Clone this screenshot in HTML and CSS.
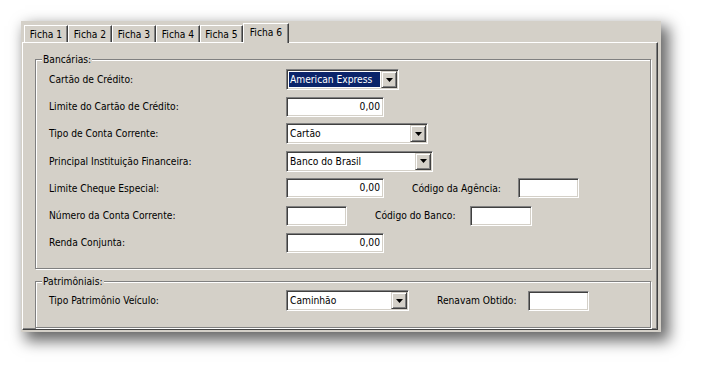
FILE: index.html
```html
<!DOCTYPE html>
<html lang="pt">
<head>
<meta charset="utf-8">
<title>Fichas</title>
<link rel="stylesheet" href="styles.css">
</head>
<body>
<div class="window">
  <div class="tabs">
    <div class="tab">Ficha 1</div>
    <div class="tab">Ficha 2</div>
    <div class="tab">Ficha 3</div>
    <div class="tab">Ficha 4</div>
    <div class="tab t5">Ficha 5</div>
    <div class="tab active">Ficha 6</div>
  </div>
  <div class="panel">
    <div class="group g1">
      <span class="legend">Bancárias:</span>
      <div class="row">
        <span class="lbl">Cartão de Crédito:</span>
        <div class="combo w113"><span class="val hl">American Express</span><span class="btn"><svg width="7" height="4" viewBox="0 0 7 4"><polygon points="0,0 7,0 3.5,4" fill="#000"/></svg></span></div>
      </div>
      <div class="row">
        <span class="lbl">Limite do Cartão de Crédito:</span>
        <div class="edit w98">0,00</div>
      </div>
      <div class="row">
        <span class="lbl">Tipo de Conta Corrente:</span>
        <div class="combo w142"><span class="val">Cartão</span><span class="btn"><svg width="7" height="4" viewBox="0 0 7 4"><polygon points="0,0 7,0 3.5,4" fill="#000"/></svg></span></div>
      </div>
      <div class="row">
        <span class="lbl">Principal Instituição Financeira:</span>
        <div class="combo w147"><span class="val">Banco do Brasil</span><span class="btn"><svg width="7" height="4" viewBox="0 0 7 4"><polygon points="0,0 7,0 3.5,4" fill="#000"/></svg></span></div>
      </div>
      <div class="row">
        <span class="lbl">Limite Cheque Especial:</span>
        <div class="edit w98">0,00</div>
        <span class="lbl2 w106">Código da Agência:</span>
        <div class="edit w61"></div>
      </div>
      <div class="row">
        <span class="lbl">Número da Conta Corrente:</span>
        <div class="edit w61"></div>
        <span class="lbl2 w95">Código do Banco:</span>
        <div class="edit w62"></div>
      </div>
      <div class="row">
        <span class="lbl">Renda Conjunta:</span>
        <div class="edit w98">0,00</div>
      </div>
    </div>
    <div class="group g2">
      <span class="legend">Patrimôniais:</span>
      <div class="row">
        <span class="lbl">Tipo Patrimônio Veículo:</span>
        <div class="combo w123"><span class="val">Caminhão</span><span class="btn"><svg width="7" height="4" viewBox="0 0 7 4"><polygon points="0,0 7,0 3.5,4" fill="#000"/></svg></span></div>
        <span class="lbl2 w91">Renavam Obtido:</span>
        <div class="edit w61"></div>
      </div>
    </div>
  </div>
</div>
</body>
</html>
```

FILE: styles.css
```css
html, body {
  margin: 0;
  padding: 0;
  background: #fff;
}
body {
  font: 10.2px "DejaVu Sans Condensed", "Liberation Sans", Arial, sans-serif;
  color: #000;
  height: 373px;
}
.window {
  margin: 21px 0 0 21px;
  width: 640px;
  height: 311px;
  box-sizing: border-box;
  background: #d4d0c8;
  padding: 2px 3px 2px 1px;
  display: flex;
  flex-direction: column;
  box-shadow: 6px 7px 14px 2px rgba(0, 0, 0, 0.6);
}
.tabs {
  display: flex;
  align-items: flex-end;
  height: 19px;
  padding-left: 2px;
  position: relative;
  z-index: 1;
}
.tab {
  width: 44px;
  height: 17px;
  box-sizing: border-box;
  border-top: 1px solid #fff;
  border-left: 1px solid #fff;
  border-right: 1px solid #404040;
  box-shadow: inset -1px 0 #808080;
  text-align: center;
  line-height: 18px;
  white-space: nowrap;
}
.tab.t5 {
  width: 43px;
}
.tab.active {
  width: 46px;
  height: 20px;
  margin-bottom: -1px;
  line-height: 17px;
  background: #d4d0c8;
}
.panel {
  flex: 1;
  box-sizing: border-box;
  border: 1px solid;
  border-color: #fff #404040 #404040 #fff;
  box-shadow: inset -1px -1px #808080;
  padding: 16px 0 0 12px;
}
.group {
  position: relative;
  width: 616px;
  box-sizing: border-box;
  border: 1px solid #808080;
  box-shadow: inset 1px 1px #fff, 1px 1px #fff;
  padding-left: 13px;
}
.g1 {
  height: 210px;
  padding-top: 6px;
}
.g2 {
  height: 47px;
  margin-top: 12px;
  padding-top: 5px;
}
.legend {
  position: absolute;
  top: -7px;
  left: 6px;
  padding: 0 1px;
  background: #d4d0c8;
  line-height: 13px;
}
.row {
  display: flex;
  align-items: center;
  height: 27.2px;
}
.g2 .row {
  height: 27px;
}
.lbl {
  width: 237px;
  flex: none;
  white-space: nowrap;
}
.lbl2 {
  margin-left: 28px;
  flex: none;
  white-space: nowrap;
}
.w106 { width: 106px; }
.w95 { width: 95px; }
.w91 { width: 91px; }
.edit {
  height: 20px;
  box-sizing: border-box;
  border: 1px solid;
  border-color: #808080 #fff #fff #808080;
  box-shadow: inset 1px 1px #404040, inset -1px -1px #d4d0c8;
  background: #fff;
  text-align: right;
  padding: 0 3px;
  line-height: 18px;
  flex: none;
}
.combo {
  height: 21px;
  box-sizing: border-box;
  border: 1px solid;
  border-color: #808080 #fff #fff #808080;
  box-shadow: inset 1px 1px #404040, inset -1px -1px #d4d0c8;
  background: #fff;
  padding: 2px;
  display: flex;
  flex: none;
}
.val {
  flex: 1;
  line-height: 15px;
  padding-left: 1px;
  margin-right: 1px;
  white-space: nowrap;
  overflow: hidden;
}
.val.hl {
  background: #0a246a;
  color: #fff;
}
.btn {
  width: 16px;
  height: 17px;
  margin-top: -1px;
  margin-right: -1px;
  box-sizing: border-box;
  border: 1px solid;
  border-color: #d4d0c8 #404040 #404040 #d4d0c8;
  box-shadow: inset 1px 1px #fff, inset -1px -1px #808080;
  background: #d4d0c8;
  display: flex;
  align-items: center;
  justify-content: center;
}
.w113 { width: 113px; }
.w142 { width: 142px; }
.w147 { width: 147px; }
.w123 { width: 123px; }
.w98 { width: 98px; }
.w61 { width: 61px; }
.w62 { width: 62px; }
```
